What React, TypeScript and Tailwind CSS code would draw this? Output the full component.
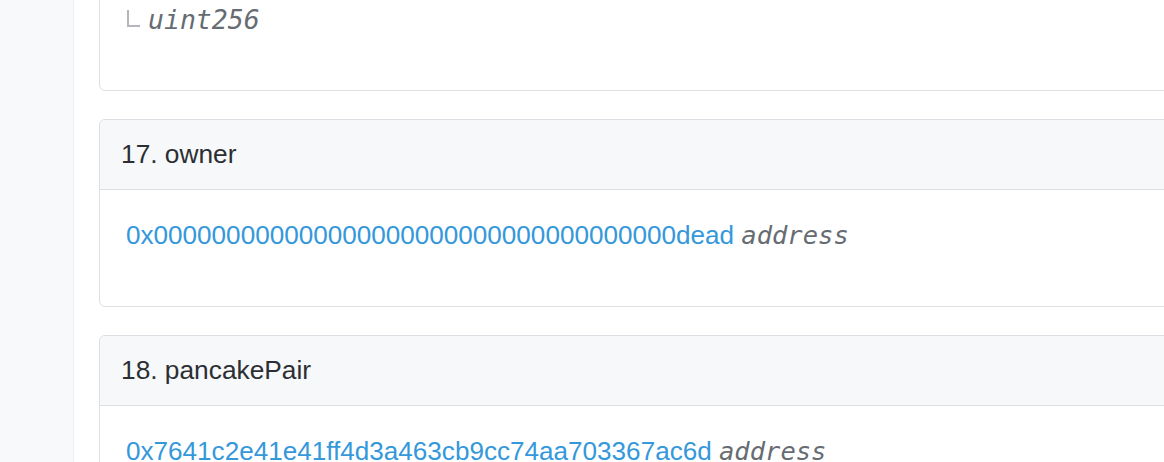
import React from "react";

const sans = { fontFamily: '"Liberation Sans", Arial, sans-serif' };
const mono = { fontFamily: '"DejaVu Sans Mono", "Liberation Mono", monospace' };

function Header({ children }: { children: React.ReactNode }) {
  return (
    <div className="bg-[#f7f8fa] border-b border-[#dcdfe3] px-[21px] py-[15px] text-[26.3px] leading-[39px] text-[#2b2f33] rounded-t-[6px]">
      {children}
    </div>
  );
}

function AddressLine({ addr, type }: { addr: string; type: string }) {
  return (
    <div className="text-[26.1px] leading-[39px] whitespace-nowrap">
      <span className="text-[#3498db]">{addr}</span>{" "}
      <span className="italic text-[#676c73] text-[25.5px]" style={mono}>
        {type}
      </span>
    </div>
  );
}

export default function App() {
  return (
    <div className="w-[1164px] h-[462px] overflow-hidden flex bg-white" style={sans}>
      <div className="w-[74px] shrink-0 bg-[#f8f9fb] border-r border-[#eceef1]" />
      <div className="flex-1 min-w-0 pl-[25px] overflow-hidden">
        <div className="w-[1200px] flex flex-col gap-[28px] -mt-[27px]">
          <div className="border border-[#dcdfe3] rounded-[6px] px-[26px] pt-[26px] pb-[51px]">
            <div className="flex items-center text-[26px] leading-[39px] whitespace-nowrap">
              <svg width="22" height="39" viewBox="0 0 22 39" className="shrink-0">
                <path d="M2 10 V26 H14" fill="none" stroke="#b3b7bd" strokeWidth="2" />
              </svg>
              <span className="italic text-[#676c73] text-[26.5px]" style={mono}>
                uint256
              </span>
            </div>
          </div>

          <div className="border border-[#dcdfe3] rounded-[6px]">
            <Header>17. owner</Header>
            <div className="px-[26px] pt-[26px] pb-[51px]">
              <AddressLine addr="0x000000000000000000000000000000000000dead" type="address" />
            </div>
          </div>

          <div className="border border-[#dcdfe3] rounded-[6px]">
            <Header>18. pancakePair</Header>
            <div className="px-[26px] pt-[26px] pb-[51px]">
              <AddressLine addr="0x7641c2e41e41ff4d3a463cb9cc74aa703367ac6d" type="address" />
            </div>
          </div>
        </div>
      </div>
    </div>
  );
}
